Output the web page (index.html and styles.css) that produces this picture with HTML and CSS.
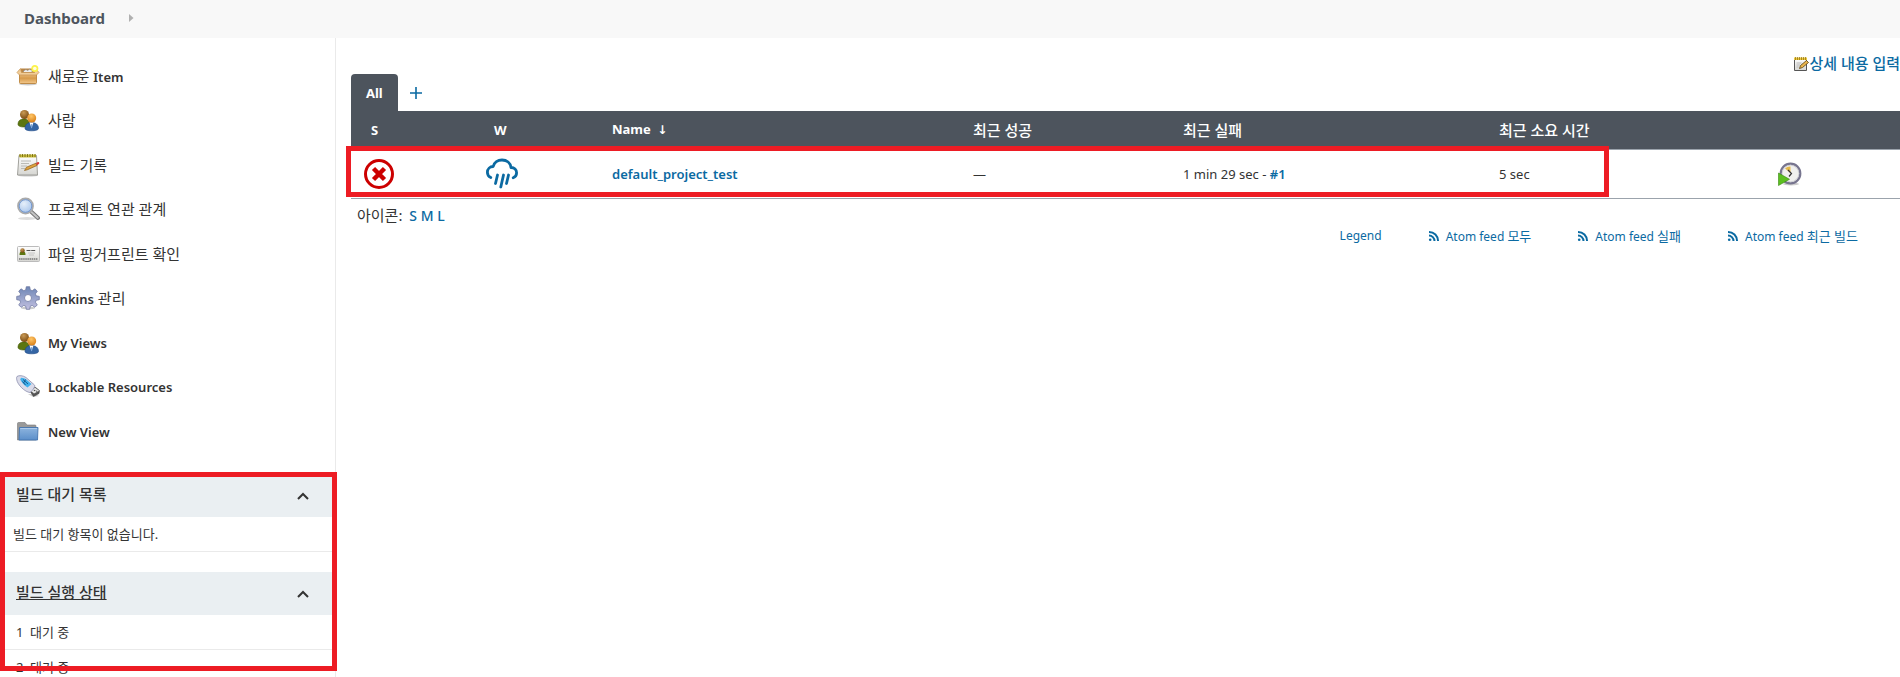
FILE: index.html
```html
<!DOCTYPE html>
<html lang="ko">
<head>
<meta charset="UTF-8">
<meta name="viewport" content="width=device-width, initial-scale=1.0">
<title>Dashboard [Jenkins]</title>
<link rel="stylesheet" href="styles.css">
</head>
<body>

<!-- Shared icons -->
<svg class="defs" aria-hidden="true">
    <defs>
        <linearGradient id="gBox" x1="0" y1="0" x2="0" y2="1"><stop offset="0" stop-color="#f0c58a"/><stop offset=".5" stop-color="#d69a4b"/><stop offset="1" stop-color="#f3c98d"/></linearGradient>
        <radialGradient id="gBrown" cx=".4" cy=".3" r=".7"><stop offset="0" stop-color="#c99a55"/><stop offset="1" stop-color="#7a4a12"/></radialGradient>
        <radialGradient id="gOrange" cx=".45" cy=".3" r=".7"><stop offset="0" stop-color="#ffc667"/><stop offset="1" stop-color="#d97f17"/></radialGradient>
        <linearGradient id="gPaper" x1="0" y1="0" x2="0" y2="1"><stop offset="0" stop-color="#ffffff"/><stop offset="1" stop-color="#d6d6d2"/></linearGradient>
        <linearGradient id="gGear" x1="0" y1="0" x2="0" y2="1"><stop offset="0" stop-color="#6d86b5"/><stop offset="1" stop-color="#c3c0e0"/></linearGradient>
        <linearGradient id="gFolder" x1="0" y1="0" x2="0" y2="1"><stop offset="0" stop-color="#8db4de"/><stop offset="1" stop-color="#5c8fca"/></linearGradient>
        <radialGradient id="gLens" cx=".4" cy=".35" r=".7"><stop offset="0" stop-color="#e6effa"/><stop offset="1" stop-color="#a3c1ea"/></radialGradient>
        <symbol id="users" viewBox="0 0 24 24">
            <path d="M2 16.500c0-4 2.500-5.500 6-5.500s5.500 2 5.500 5.500c0 1.500-3 2.500-6 2.500s-5.500-1-5.500-2.500z" fill="#5c7610" stroke="#43590a" stroke-width=".6"/>
            <circle cx="8.500" cy="6.500" r="4.500" fill="url(#gBrown)"/>
            <path d="M9 20.500c0-4 2.500-6 6.500-6s7 2 7 6c0 1.500-3.500 2.300-7 2.300s-6.500-.8-6.500-2.300z" fill="#3465a4" stroke="#204a87" stroke-width=".6"/>
            <path d="M13.500 14.500h4L15.500 20z" fill="#fff"/>
            <path d="M15.200 16h.8l.4 3-.8 1.500-.8-1.500z" fill="#7aa4d8"/>
            <circle cx="15.700" cy="10" r="4.500" fill="url(#gOrange)"/>
        </symbol>
        <symbol id="chevron" viewBox="0 0 12 12"><path d="M1 9l5-5 5 5" fill="none" stroke="#333" stroke-width="2"/></symbol>
        <symbol id="rss" viewBox="0 0 12 12"><g fill="none" stroke="#0b6aa2" stroke-width="2"><path d="M1 5.500A5.500 5.500 0 0 1 6.500 11"/><path d="M1 1.900A9.100 9.100 0 0 1 10.100 11"/></g><circle cx="2.200" cy="9.800" r="1.300" fill="#0b6aa2"/></symbol>
    </defs>
</svg>

<nav class="breadcrumbs">
    <a href="#">Dashboard</a>
    <svg viewBox="0 0 5 8" width="5" height="8"><path d="M0 0l4.500 4L0 8z" fill="#b0b0b0"/></svg>
</nav>

<div class="page">
    <aside class="sidebar">
        <ul class="tasks">
            <li><a href="#">
                <svg viewBox="0 0 24 24">
                    <ellipse cx="12" cy="20" rx="9" ry="1.500" fill="#ccc"/>
                    <path d="M5 4.500h14l2 5H3z" fill="#b98545"/>
                    <path d="M8 6.500l2-1 1.500 1 2-1.200 3 1.200-1 2H7z" fill="#eee" stroke="#777" stroke-width=".5"/>
                    <path d="M3.500 9h17v9.500a1 1 0 0 1-1 1h-15a1 1 0 0 1-1-1z" fill="url(#gBox)" stroke="#b67b2f" stroke-width=".8"/>
                    <path d="M4.500 4.500L1 8.500l2.500 2.500h17L23 8.500 20 5l-1.500 3.500h-13z" fill="#f1cd98" stroke="#c6904e" stroke-width=".7"/>
                    <circle cx="18.800" cy="4.500" r="3.500" fill="#fcf34a"/><circle cx="18.800" cy="4.500" r="1.800" fill="#fffde0"/>
                </svg>
                <span>새로운 <span class="en">Item</span></span></a></li>
            <li><a href="#"><svg viewBox="0 0 24 24"><use href="#users"/></svg><span>사람</span></a></li>
            <li><a href="#">
                <svg viewBox="0 0 24 24">
                    <ellipse cx="12" cy="22.500" rx="10" ry="1" fill="#ccc"/>
                    <path d="M3 2.500h17.500L21.500 22h-20z" fill="url(#gPaper)" stroke="#969691" stroke-width=".9"/>
                    <path d="M3.500 1.500h16.500v3h-16.500z" fill="#c9bc3d"/>
                    <path d="M4 1v3M6.500 1v3M9 1v3M11.500 1v3M14 1v3M16.500 1v3M19 1v3" stroke="#786e12" stroke-width=".9"/>
                    <path d="M5 8h10M5 10.500h8M5 13h6M5 15.500h4" stroke="#b4b4b0" stroke-width=".9"/>
                    <path d="M8.500 17.500l2-3.300 9.500-4 1 2.300-9.500 4.200z" fill="#dfa23c" stroke="#875a17" stroke-width=".7"/>
                    <path d="M20 10l2-1c1.200-.2 1.800 1.400.8 2l-1.800 1.300z" fill="#d83a35"/>
                </svg>
                <span>빌드 기록</span></a></li>
            <li><a href="#">
                <svg viewBox="0 0 24 24">
                    <ellipse cx="11" cy="21.500" rx="9" ry="1.500" fill="#ddd"/>
                    <path d="M15 14.500l7 6.500" stroke="#777" stroke-width="4" stroke-linecap="round"/>
                    <path d="M15.500 15l6.200 5.800" stroke="#c4c4c4" stroke-width="2" stroke-linecap="round"/>
                    <circle cx="9.500" cy="9" r="7.500" fill="url(#gLens)" stroke="#aaa" stroke-width="1.800"/>
                    <circle cx="9.500" cy="9" r="6.300" fill="none" stroke="#6c93ce" stroke-width=".9"/>
                </svg>
                <span>프로젝트 연관 관계</span></a></li>
            <li><a href="#">
                <svg viewBox="0 0 24 24">
                    <rect x="1.500" y="4.500" width="22" height="15" rx="1" fill="url(#gPaper)" stroke="#bbb"/>
                    <path d="M3.500 13c0-3 1-4 3-4s3 1 3 4z" fill="#5c7610"/><circle cx="6.500" cy="8.500" r="2.200" fill="url(#gBrown)"/>
                    <path d="M10.500 8.500h9" stroke="#555" stroke-dasharray="4 .7"/><path d="M12 11h7M13 13h5" stroke="#bbb" stroke-width=".8"/>
                    <path d="M3 17h19" stroke="#777" stroke-width="1.400" stroke-dasharray="1.500 .6"/>
                </svg>
                <span>파일 핑거프린트 확인</span></a></li>
            <li><a href="#">
                <svg viewBox="0 0 24 24">
                    <ellipse cx="12" cy="22" rx="7" ry="1.300" fill="#ccc"/>
                    <path fill-rule="evenodd" d="M10.300.7h3.400l.6 3.200 1.900.8 2.700-1.900 2.400 2.400-1.900 2.700.8 1.900 3.100.6v3.300l-3.100.6-.8 1.900 1.900 2.700-2.400 2.400-2.700-1.900-1.900.8-.6 3.100h-3.400l-.6-3.100-1.900-.8-2.700 1.900-2.400-2.400 1.900-2.700-.8-1.900-3.100-.6v-3.300l3.100-.6.8-1.900-1.900-2.700 2.400-2.400 2.700 1.900 1.900-.8zM12 8.500a3.500 3.500 0 1 0 0 7 3.500 3.500 0 1 0 0-7z" fill="url(#gGear)" stroke="#66709b" stroke-width=".7"/>
                </svg>
                <span><span class="en">Jenkins</span> 관리</span></a></li>
            <li><a href="#"><svg viewBox="0 0 24 24"><use href="#users"/></svg><span class="en">My Views</span></a></li>
            <li><a href="#">
                <svg viewBox="0 0 24 24">
                    <path d="M12 19l5 3 6-1-4-2z" fill="#ccc"/>
                    <path d="M13.500 15.500l5.500-3.500 4.500 3.500-.5 3-5.500 3z" fill="#555" stroke="#333" stroke-width=".5"/>
                    <path d="M14.500 15.500l4.500-2.700 4.200 3-5.200 2.700z" fill="#e6e6e6"/>
                    <path d="M17.500 15.500l1.200-.7 1 .7-1.200.7zM19.800 16.200l1-.6.8.6-1 .5z" fill="#444"/>
                    <path d="M1 1.500C3 0 7 .5 10 2.500l8.500 7.500c.8 1-1 5-4.500 7.500C9 17 1.500 10 .7 4.500.5 3 .5 2 1 1.500z" fill="#dadbe9" stroke="#8d8fae" stroke-width=".8"/>
                    <path d="M5 2.800c2.500 0 5 1.200 7 3.200l3.500 3-4 3.500C8 10.500 5.500 7 4.200 4.500z" fill="#40b0ec"/>
                    <path d="M7 4.500l5 4.500M6.500 6.500l3 3.500M9.500 4.500l-1.500 3" stroke="#19598c"/>
                </svg>
                <span class="en">Lockable Resources</span></a></li>
            <li><a href="#">
                <svg viewBox="0 0 24 24">
                    <path d="M1.500 3.500a1 1 0 0 1 1-1h6.500l2 2.500h8a1 1 0 0 1 1 1v14h-18.500z" fill="#999" stroke="#777" stroke-width=".6"/>
                    <path d="M3.500 7.500h18.500l-.5 12.500h-18.500z" fill="url(#gFolder)" stroke="#4474ae" stroke-width=".9"/>
                    <path d="M4.300 8.500h16.700" stroke="#b6d1ef" stroke-width=".8"/>
                </svg>
                <span class="en">New View</span></a></li>
        </ul>

        <div class="panes">
            <section class="pane">
                <header><h2>빌드 대기 목록</h2><button type="button" aria-label="접기"><svg viewBox="0 0 12 12"><use href="#chevron"/></svg></button></header>
                <p class="empty">빌드 대기 항목이 없습니다.</p>
            </section>
            <section class="pane">
                <header><h2><a href="#">빌드 실행 상태</a></h2><button type="button" aria-label="접기"><svg viewBox="0 0 12 12"><use href="#chevron"/></svg></button></header>
                <table class="executors">
                    <tr><td class="num">1</td><td>대기 중</td></tr>
                    <tr><td class="num">2</td><td>대기 중</td></tr>
                </table>
            </section>
            <div class="mark mark-panes"></div>
        </div>
    </aside>

    <main class="main">
        <div class="description">
            <a href="#">
                <svg viewBox="0 0 16 16">
                    <path d="M1.500 3.500h12v12h-12z" fill="url(#gPaper)" stroke="#555"/>
                    <path d="M1 2.500h13v2.500H1z" fill="#edc93d"/><path d="M2.500 2v3M4.500 2v3M6.500 2v3M8.500 2v3M10.500 2v3M12.500 2v3" stroke="#8c6d10" stroke-width=".7"/>
                    <path d="M3.500 8h5M3.500 10h3.500M3.500 12h2" stroke="#aaa" stroke-width=".8"/>
                    <path d="M6.500 13.500l1-3 6-5 2 2-6 5z" fill="#e9b44c" stroke="#59400e" stroke-width=".8"/>
                </svg>상세 내용 입력</a>
        </div>

        <div class="tabs">
            <a class="tab active" href="#">All</a>
            <a class="add" href="#" aria-label="New View"><svg viewBox="0 0 12 12"><path d="M6 0v12M0 6h12" stroke="#0b6aa2" stroke-width="1.600"/></svg></a>
        </div>

        <div class="projects-wrap">
            <table class="projects">
                <colgroup><col class="c-status"><col class="c-weather"><col class="c-name"><col class="c-success"><col class="c-failure"><col class="c-duration"><col></colgroup>
                <thead>
                    <tr>
                        <th class="icon-head">S</th>
                        <th class="icon-head">W</th>
                        <th>Name <span class="sort">↓</span></th>
                        <th class="ko">최근 성공</th>
                        <th class="ko">최근 실패</th>
                        <th class="ko">최근 소요 시간</th>
                        <th></th>
                    </tr>
                </thead>
                <tbody>
                    <tr>
                        <td><svg class="status" viewBox="0 0 32 32"><circle cx="16" cy="16" r="13.500" fill="none" stroke="#c00" stroke-width="3"/><path d="M10.500 10.500l11 11M21.500 10.500l-11 11" stroke="#c00" stroke-width="4.500"/></svg></td>
                        <td><svg class="status" viewBox="0 0 32 32"><g fill="none" stroke="#0b6aa2" stroke-width="2.800" stroke-linecap="round" stroke-linejoin="round"><path d="M4.800 19.500C2.500 18.500 1.400 16.500 1.400 14.200c0-3.200 2.500-5.700 5.800-5.700C8.200 4.500 11.800 2 16 2c4.800 0 8.500 3 9 7.500 3.400 0 5.600 2.200 5.600 5.200 0 2.400-1.300 4.200-3.400 5"/><path d="M11.500 17l-2 8.500M17.500 17L14.800 29M22.500 17l-2 8.500"/></g></svg></td>
                        <td><a href="#">default_project_test</a></td>
                        <td>—</td>
                        <td>1 min 29 sec - <a href="#">#1</a></td>
                        <td>5 sec</td>
                        <td><a href="#" aria-label="Build"><svg class="build" viewBox="0 0 24 24">
                            <ellipse cx="13" cy="22" rx="8" ry="1.500" fill="#ccc"/>
                            <circle cx="12.500" cy="11.500" r="9.800" fill="#f0f0ee" stroke="#77758f" stroke-width="2.200"/>
                            <circle cx="12.500" cy="11.500" r="8.300" fill="none" stroke="#c5c5cd" stroke-width=".7"/>
                            <path d="M12.500 11L7 6.500a7 7 0 0 1 5.500-2z" fill="#e5b94a"/>
                            <path d="M10 8l3.500 3.500-2.500 3" fill="none" stroke="#333" stroke-width="1.200"/>
                            <path d="M.5 11l11 6.300L.5 23.500z" fill="#5cbf20" stroke="#37880e" stroke-width=".6"/>
                        </svg></a></td>
                    </tr>
                </tbody>
            </table>
            <div class="mark mark-job"></div>
        </div>

        <div class="icon-size">아이콘: <span class="sizes"><a href="#">S</a> <a href="#">M</a> <a href="#">L</a></span></div>

        <div class="feeds">
            <a href="#">Legend</a>
            <a href="#"><svg viewBox="0 0 12 12"><use href="#rss"/></svg><span>Atom feed <span class="ko">모두</span></span></a>
            <a href="#"><svg viewBox="0 0 12 12"><use href="#rss"/></svg><span>Atom feed <span class="ko">실패</span></span></a>
            <a href="#"><svg viewBox="0 0 12 12"><use href="#rss"/></svg><span>Atom feed <span class="ko">최근 빌드</span></span></a>
        </div>
    </main>
</div>

</body>
</html>
```

FILE: styles.css
```css
* {
    box-sizing: border-box;
}

body {
    margin: 0;
    height: 100vh;
    overflow: hidden;
    display: flex;
    flex-direction: column;
    font-family: "Noto Sans", "Noto Sans CJK KR", sans-serif;
    font-size: 13px;
    line-height: 20px;
    color: #333;
    background-color: #fff;
}

a {
    color: #0b6aa2;
    font-weight: 600;
    text-decoration: none;
}

svg {
    display: block;
    flex: none;
}

.defs {
    position: absolute;
    width: 0;
    height: 0;
}

/* Breadcrumb bar */
.breadcrumbs {
    display: flex;
    flex: none;
    align-items: center;
    gap: 24px;
    height: 38px;
    padding: 0 24px 2px;
    background-color: #f8f8f8;
}

.breadcrumbs a {
    color: #4d545d;
    font-size: 15px;
    font-weight: 700;
}

.page {
    display: flex;
    flex: 1;
    min-height: 0;
}

/* Sidebar */
.sidebar {
    flex: none;
    width: 336px;
    border-right: 1px solid #eaeaea;
}

.tasks {
    list-style: none;
    margin: 0;
    padding: 16px 16px 0;
}

.tasks li:nth-child(even) {
    padding-bottom: 1px;
}

.tasks a {
    display: flex;
    align-items: center;
    gap: 8px;
    height: 44px;
    color: #333;
    font-size: 15px;
    font-weight: 400;
}

.tasks svg {
    width: 24px;
    height: 24px;
}

.tasks .en {
    font-size: 13px;
    font-weight: 600;
}

.panes {
    position: relative;
    margin-top: 20px;
}

.pane {
    margin-bottom: 20px;
}

.pane header {
    display: flex;
    align-items: center;
    justify-content: space-between;
    height: 43px;
    padding: 0 22px 0 16px;
    background-color: #eaeff2;
}

.pane h2 {
    margin: 0;
    padding-bottom: 4px;
    font-size: 15px;
    font-weight: 500;
}

.pane h2 a {
    color: #333;
    font-weight: 500;
    text-decoration: underline;
}

.pane button {
    padding: 4px;
    border: none;
    background: none;
    cursor: pointer;
}

.pane button svg {
    width: 12px;
    height: 12px;
}

.empty {
    margin: 0;
    padding: 7px 13px;
    border-bottom: 1px solid #eaeaea;
}

.executors {
    width: 100%;
    border-collapse: collapse;
}

.executors td {
    padding: 7px 0;
    border-bottom: 1px solid #eaeaea;
}

.executors .num {
    width: 30px;
    padding-left: 16px;
}

/* Red highlight frames */
.mark {
    position: absolute;
    border: 5px solid #ed1c24;
    pointer-events: none;
}

.mark-panes {
    top: -2px;
    left: 0;
    right: -2px;
    height: 199px;
}

.mark-job {
    top: 35px;
    left: -5px;
    right: 291px;
    bottom: 2px;
}

/* Main panel */
.main {
    flex: 1;
    min-width: 0;
    padding: 15px 0 0 15px;
}

.description {
    display: flex;
    justify-content: flex-end;
    padding-bottom: 1px;
}

.description a {
    display: flex;
    align-items: center;
    font-size: 15px;
    font-weight: 500;
}

.description svg {
    width: 16px;
    height: 16px;
}

.tabs {
    display: flex;
    align-items: center;
}

.tab {
    padding: 9px 15px 8px;
    border-radius: 4px 4px 0 0;
    color: #fff;
    background-color: #4d545d;
    font-weight: 700;
}

.add {
    padding: 12px;
}

.add svg {
    width: 12px;
    height: 12px;
}

.projects-wrap {
    position: relative;
}

.projects {
    width: 100%;
    table-layout: fixed;
    border-collapse: collapse;
    border-bottom: 1px solid #9ba3ac;
}

.projects th {
    height: 38px;
    padding: 0 12px;
    color: #fff;
    background-color: #4d545d;
    font-weight: 700;
    text-align: left;
}

.projects .icon-head {
    padding-left: 20px;
}

.projects th.ko {
    font-size: 15px;
    font-weight: 500;
}

.projects td {
    height: 49px;
    padding: 0 12px;
    border-top: 1px solid #9ba3ac;
}

.sort {
    margin-left: 3px;
    font-family: "DejaVu Sans", sans-serif;
    font-size: 12px;
}

.c-status {
    width: 123px;
}

.c-weather {
    width: 126px;
}

.c-name {
    width: 361px;
}

.c-success {
    width: 210px;
}

.c-failure {
    width: 316px;
}

.c-duration {
    width: 279px;
}

.status {
    width: 32px;
    height: 32px;
}

.build {
    width: 24px;
    height: 24px;
}

.icon-size {
    padding: 6px 6px 0;
    font-size: 15px;
}

.sizes {
    margin-left: 3px;
    font-size: 14px;
}

.sizes a {
    font-weight: 500;
}

.feeds {
    display: flex;
    justify-content: flex-end;
    gap: 46px;
    padding-right: 42px;
    font-size: 12px;
}

.feeds a {
    display: flex;
    align-items: center;
    gap: 6px;
    font-weight: 400;
}

.feeds svg {
    width: 12px;
    height: 12px;
}

.feeds .ko {
    font-size: 13px;
}
```
